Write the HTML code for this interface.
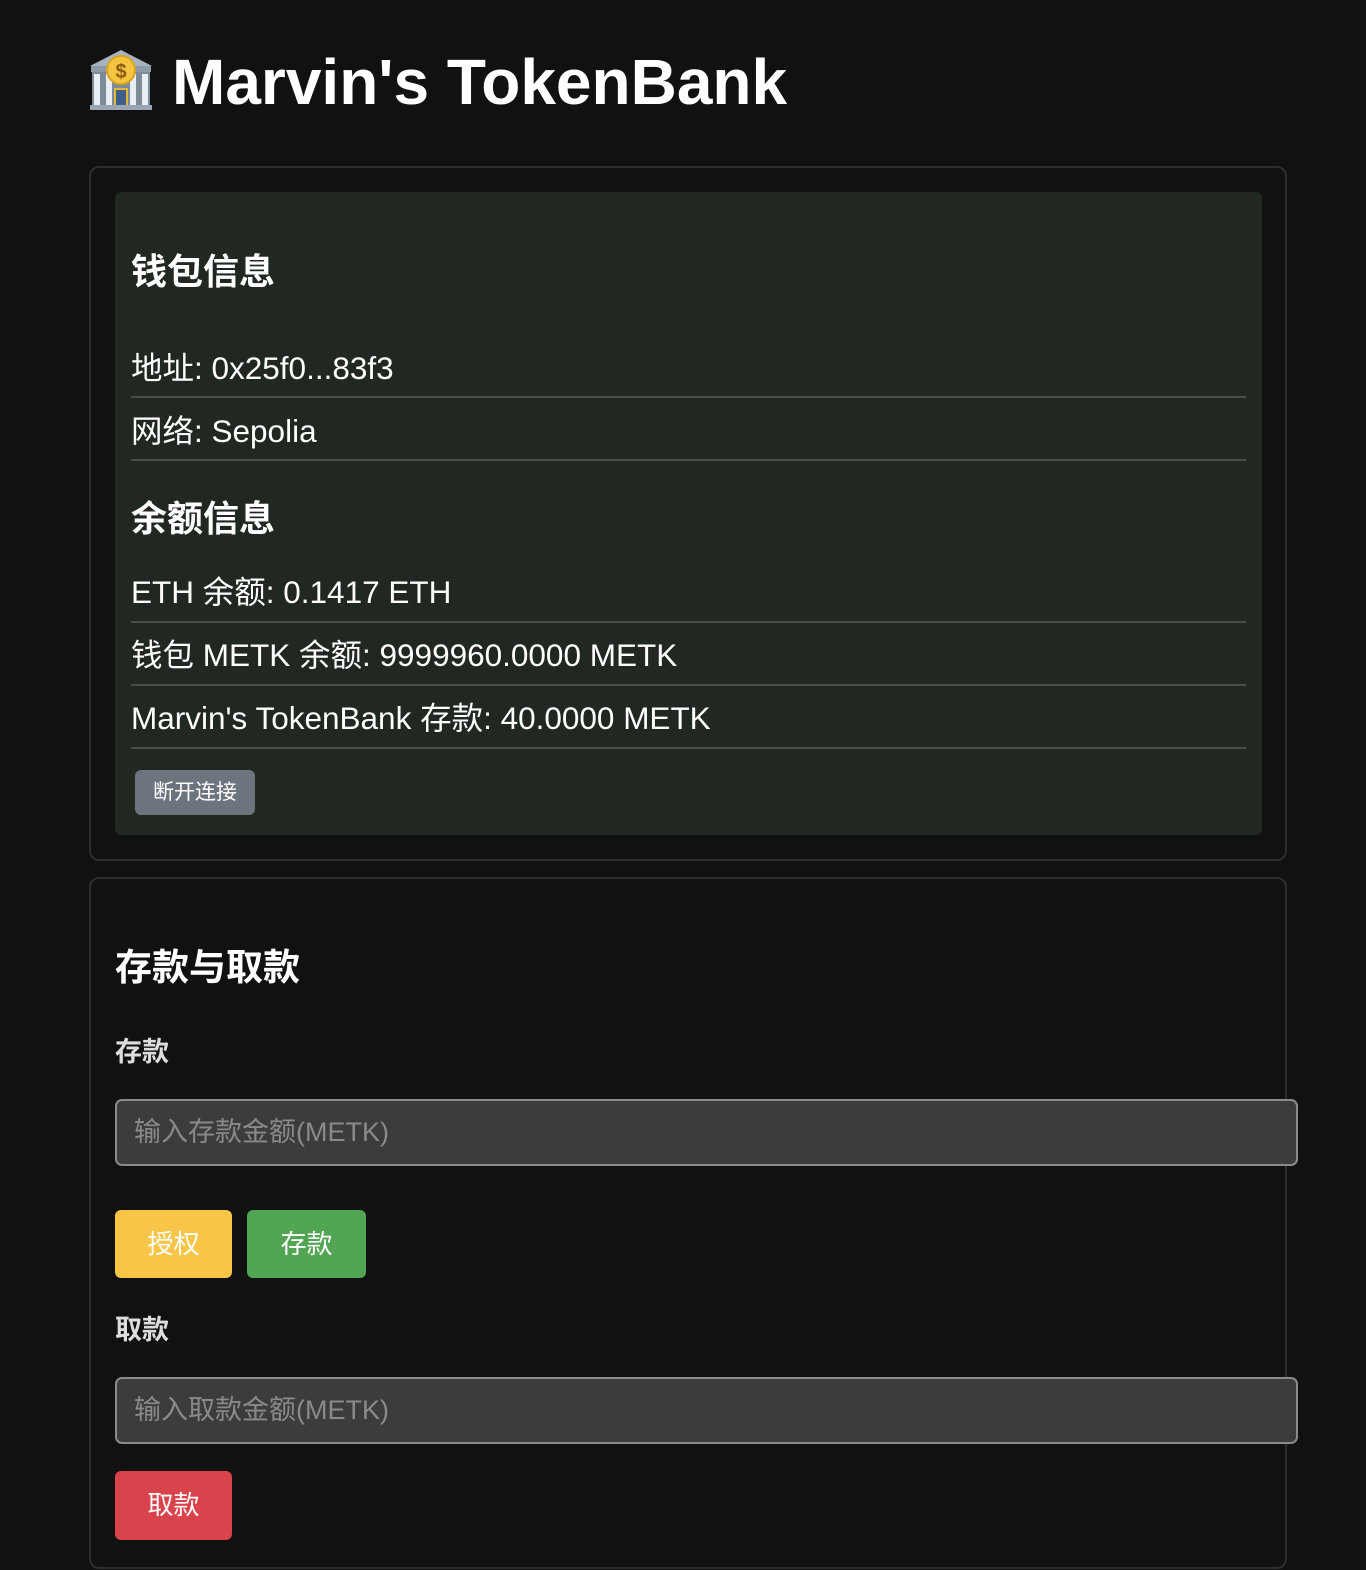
<!DOCTYPE html>
<html><head><meta charset="utf-8"><style>
*{margin:0;padding:0;box-sizing:border-box}
body{width:1366px;height:1570px;background:#111111;font-family:"Liberation Sans","Noto Sans CJK SC",sans-serif;color:#fff;position:relative;overflow:hidden}
.a{position:absolute;white-space:nowrap}
.card{position:absolute;border:2px solid #2e2e2e;border-radius:10px}
.line{position:absolute;left:131px;width:1115px;height:2px;background:#4a4e4a}
.row{position:absolute;left:131px;font-size:31.5px;line-height:40px}
.h{font-weight:bold;font-size:36px;line-height:44px}
.btn{position:absolute;border-radius:6px;color:#fff;text-align:center;font-size:26px}
.inp{position:absolute;left:115px;width:1183px;height:67px;background:#3c3c3c;border:2px solid #8a8a8a;border-radius:7px;color:#8a8a8a;font-size:27px;line-height:63px;padding-left:17px}
</style></head><body>
<svg class="a" style="left:88px;top:46px" width="66" height="66" viewBox="0 0 66 66">
<polygon points="33,4 2,20 64,20" fill="#a7b3bf"/>
<rect x="3" y="20" width="60" height="6" fill="#8e9aa6"/>
<rect x="4" y="26" width="58" height="34" fill="#7d8a97"/>
<rect x="6" y="28" width="6" height="32" fill="#e8eef3"/><rect x="54" y="28" width="6" height="32" fill="#e8eef3"/>
<rect x="18" y="28" width="6" height="32" fill="#e8eef3"/><rect x="42" y="28" width="6" height="32" fill="#e8eef3"/>
<rect x="27" y="43" width="12" height="17" fill="#3d5f8a" stroke="#e7b73a" stroke-width="2"/>
<rect x="2" y="59" width="62" height="5" fill="#9aa6b2"/>
<circle cx="33" cy="24" r="14" fill="#f5c542" stroke="#d9a520" stroke-width="2"/>
<text x="33" y="32" text-anchor="middle" font-family="Liberation Sans" font-weight="bold" font-size="20" fill="#8a5a10">$</text>
</svg>
<div class="a" style="left:172px;top:42px;font-size:64px;font-weight:bold;line-height:80px">Marvin's TokenBank</div>

<div class="card" style="left:89px;top:166px;width:1198px;height:695px"></div>
<div class="a" style="left:115px;top:192px;width:1147px;height:643px;background:#212721;border-radius:6px"></div>
<div class="a h" style="left:131px;top:250px">钱包信息</div>
<div class="row" style="top:348px">地址: 0x25f0...83f3</div>
<div class="line" style="top:396px"></div>
<div class="row" style="top:411px">网络: Sepolia</div>
<div class="line" style="top:459px"></div>
<div class="a h" style="left:131px;top:497px">余额信息</div>
<div class="row" style="top:572px">ETH 余额: 0.1417 ETH</div>
<div class="line" style="top:621px"></div>
<div class="row" style="top:635px">钱包 METK 余额: 9999960.0000 METK</div>
<div class="line" style="top:684px"></div>
<div class="row" style="top:698px">Marvin's TokenBank 存款: 40.0000 METK</div>
<div class="line" style="top:747px"></div>
<div class="btn" style="left:135px;top:770px;width:120px;height:45px;background:#6c757d;font-size:21px;line-height:45px">断开连接</div>

<div class="card" style="left:89px;top:877px;width:1198px;height:692px"></div>
<div class="a" style="left:115px;top:945px;font-size:37px;font-weight:bold;line-height:46px">存款与取款</div>
<div class="a" style="left:115px;top:1035px;font-size:27px;font-weight:bold;color:#ddd;line-height:34px">存款</div>
<div class="inp" style="top:1099px">输入存款金额(METK)</div>
<div class="btn" style="left:115px;top:1210px;width:117px;height:68px;line-height:68px;background:#f7c548">授权</div>
<div class="btn" style="left:247px;top:1210px;width:119px;height:68px;line-height:68px;background:#52a552">存款</div>
<div class="a" style="left:115px;top:1313px;font-size:27px;font-weight:bold;color:#ddd;line-height:34px">取款</div>
<div class="inp" style="top:1377px">输入取款金额(METK)</div>
<div class="btn" style="left:115px;top:1471px;width:117px;height:69px;line-height:69px;background:#d9434b">取款</div>
</body></html>
